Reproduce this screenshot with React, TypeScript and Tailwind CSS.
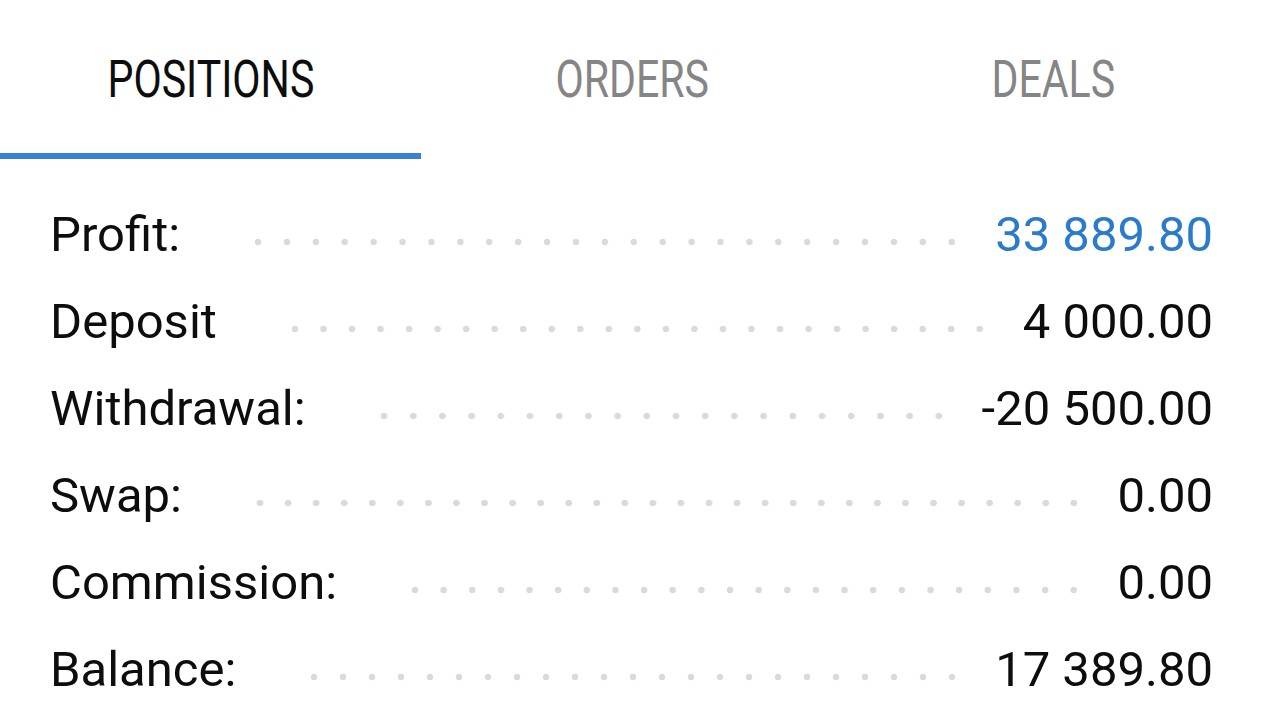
import React from 'react';

type Row = {
  label: string;
  value: string;
  accent?: boolean;
};

const rows: Row[] = [
  { label: 'Profit:', value: '33 889.80', accent: true },
  { label: 'Deposit', value: '4 000.00' },
  { label: 'Withdrawal:', value: '-20 500.00' },
  { label: 'Swap:', value: '0.00' },
  { label: 'Commission:', value: '0.00' },
  { label: 'Balance:', value: '17 389.80' },
];

const tabs = ['POSITIONS', 'ORDERS', 'DEALS'];

const App: React.FC = () => {
  const active = 0;

  return (
    <div className="w-[1264px] h-[711px] overflow-hidden bg-white font-['Roboto',sans-serif]">
      <div className="grid grid-cols-3">
        {tabs.map((tab, i) => (
          <div key={tab} className="flex flex-col">
            <div className="h-[153px] pt-[6px] flex items-center justify-center">
              <span
                className={`inline-block scale-x-[0.79] text-[52px] leading-normal ${
                  i === active ? 'text-[#0d0d0d]' : 'text-[#858585]'
                }`}
              >
                {tab}
              </span>
            </div>
            <div className={`h-[6px] ${i === active ? 'bg-[#3b80d6]' : 'bg-transparent'}`} />
          </div>
        ))}
      </div>

      <div className="pt-[32px] pl-[50px] pr-[51px]">
        {rows.map((row) => (
          <div key={row.label} className="flex items-center h-[87px] text-[49px] leading-[87px]">
            <span className="text-[#0d0d0d] whitespace-nowrap">{row.label}</span>
            {/* dotted leader between label and amount */}
            <div className="flex-1 ml-[64px] mr-[29px] h-[8px] mt-[15px] bg-[radial-gradient(circle,#dadada_3px,transparent_3.6px)] bg-[length:28px_8px] bg-repeat-space" />
            <span className={`whitespace-nowrap ${row.accent ? 'text-[#2b7bcc]' : 'text-[#0d0d0d]'}`}>
              {row.value}
            </span>
          </div>
        ))}
      </div>
    </div>
  );
};

export default App;
